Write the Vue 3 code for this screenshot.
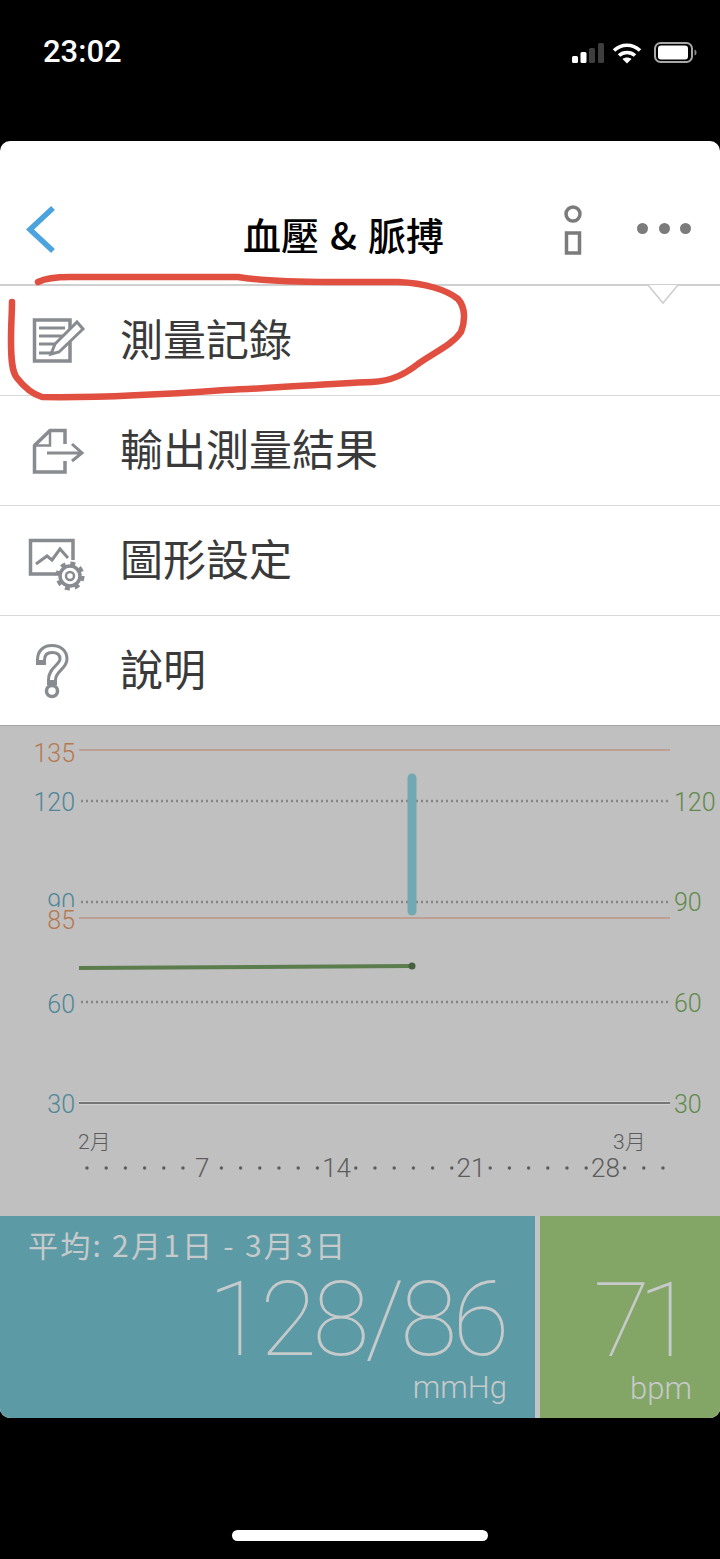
<script setup>
const menuItems = [
  { id: 'log', label: '測量記錄' },
  { id: 'export', label: '輸出測量結果' },
  { id: 'graph', label: '圖形設定' },
  { id: 'help', label: '說明' }
];

const leftAxis = [
  { value: '120', y: 801, tone: 'sys' },
  { value: '60', y: 1003, tone: 'sys' },
  { value: '30', y: 1103, tone: 'sys' },
  { value: '135', y: 752, tone: 'limit' },
  { value: '85', y: 919, tone: 'limit' }
];
const rightAxis = [120, 90, 60, 30].map((value) => ({ value, y: 1103 - (value - 30) * 3.353 }));
const dotted = [801, 902, 1002];

const labelled = { 7: '7', 14: '14', 21: '21', 28: '28' };
const days = Array.from({ length: 31 }, (_, i) => ({
  x: 87 + i * 19.2,
  label: labelled[i + 1]
}));
</script>

<template>
  <div class="screen">
    <header class="status">
      <span class="time">23:02</span>
      <div class="status-icons">
        <svg width="34" height="22" viewBox="0 0 34 22">
          <rect x="2" y="14" width="6" height="7" rx="1.5" fill="#fff" />
          <rect x="10.500" y="10" width="6" height="11" rx="1.5" fill="#fff" />
          <rect x="19" y="6" width="6" height="15" rx="1.5" fill="#3e3e3e" />
          <rect x="28" y="1" width="6" height="20" rx="1.5" fill="#3e3e3e" />
        </svg>
        <svg class="wifi" width="30" height="22" viewBox="0 0 30 22" fill="none" stroke="#fff" stroke-width="3.6">
          <path d="M2 8.500C9.500 1.500 20.500 1.500 28 8.500" />
          <path d="M7 13.500C11.500 9.500 18.500 9.500 23 13.500" />
          <path d="M15 21.500L10.500 17C13 15 17 15 19.500 17Z" fill="#fff" stroke="none" />
        </svg>
        <svg class="battery" width="44" height="22" viewBox="0 0 44 22">
          <rect x="1" y="1" width="37" height="19" rx="5.500" fill="none" stroke="#a8a8a8" stroke-width="2" />
          <rect x="4" y="3.500" width="30" height="14" rx="3" fill="#fff" />
          <path d="M40.500 7.500C42 8 42.500 9 42.500 10.500C42.500 12 42 13 40.500 13.500Z" fill="#8a8a8a" />
        </svg>
      </div>
    </header>

    <main class="card">
      <nav class="nav">
        <svg class="back" width="32" height="48" viewBox="0 0 32 48" fill="none" stroke="#4ba4de" stroke-width="5.500">
          <path d="M28 3L5 24.500L28 46" />
        </svg>
        <h1 class="title">血壓 &amp; 脈搏</h1>
        <svg class="info" width="20" height="52" viewBox="0 0 20 52" fill="none" stroke="#7b7b7b" stroke-width="3.500">
          <circle cx="10" cy="11" r="7" />
          <rect x="3.500" y="30" width="13" height="20" />
        </svg>
        <div class="more">
          <i></i><i></i><i></i>
        </div>
      </nav>

      <ul class="menu">
        <li v-for="item in menuItems" :key="item.id" class="menu-row">
          <svg class="menu-icon" width="70" height="70" viewBox="0 0 70 70" fill="none" stroke="#888b90" stroke-width="3.500">
            <template v-if="item.id === 'log'">
              <path d="M50 25V14H14.500V55H50V36" />
              <path d="M19 22H45M19 30H43M19 38H37M19 47H32" stroke-width="3" />
              <path d="M57 16L63 23L39 46L31 48L35 38Z" fill="#fff" stroke-width="3" />
            </template>
            <template v-else-if="item.id === 'export'">
              <path d="M45 28V14.500H30L14.500 29.500V56H45V45" />
              <path d="M30 14.500V29.500H14.500" stroke-width="2.500" />
              <path d="M27 37H62M52 28L62 37L52 45" stroke-width="3" />
            </template>
            <template v-else-if="item.id === 'graph'">
              <path d="M36 48H10.500V14.500H53V34" />
              <path d="M16 38L27 30L32 34L40 23L48 32" stroke-width="3" />
              <circle cx="50" cy="50" r="10" />
              <circle cx="50" cy="50" r="12.800" stroke-width="3.500" stroke-dasharray="5 5.050" />
              <circle cx="50" cy="50" r="4" stroke-width="2.500" />
            </template>
            <template v-else>
              <path d="M21 24C21 17 25 13 32 13C39 13 43.500 17 43.500 23C43.500 31 32 33 32 44" stroke-width="10" stroke-linecap="square" />
              <path d="M21 24C21 17 25 13 32 13C39 13 43.500 17 43.500 23C43.500 31 32 33 32 44" stroke="#fff" stroke-width="4" />
              <circle cx="32" cy="55" r="5.500" stroke-width="3.500" />
            </template>
          </svg>
          <span class="menu-label">{{ item.label }}</span>
        </li>
      </ul>

      <svg class="chart" width="720" height="491" viewBox="0 725 720 491">
        <defs>
          <clipPath id="clip90">
            <rect x="0" y="880" width="78" height="27" />
          </clipPath>
        </defs>

        <line x1="0" x2="720" y1="725.500" y2="725.500" stroke="#a6a6a6" />
        <line x1="79" x2="670" y1="750" y2="750" class="limit-line" />
        <line x1="79" x2="670" y1="918" y2="918" class="limit-line" />
        <line v-for="y in dotted" :key="y" x1="81" x2="671" :y1="y" :y2="y" class="dotted-line" />
        <line x1="79" x2="670" y1="1103" y2="1103" stroke="#e0e0e0" stroke-width="4" opacity="0.5" />
        <line x1="79" x2="670" y1="1103" y2="1103" stroke="#757575" stroke-width="2" />

        <line x1="412" x2="412" y1="778" y2="911" stroke="#72a8b2" stroke-width="9" stroke-linecap="round" />
        <line x1="79" x2="412" y1="968" y2="966" stroke="#5b7c4c" stroke-width="4" />
        <circle cx="412" cy="966" r="3.500" fill="#45603f" />

        <text v-for="t in leftAxis" :key="t.value" x="75" :y="t.y + 9.500" text-anchor="end" class="axis" :class="t.tone">{{ t.value }}</text>
        <text x="75" y="911.500" text-anchor="end" class="axis sys" clip-path="url(#clip90)">90</text>
        <text v-for="t in rightAxis" :key="t.value" x="674" :y="t.y + 9.500" class="axis pulse">{{ t.value }}</text>

        <text x="78" y="1149" class="month">2月</text>
        <text x="613" y="1149" class="month">3月</text>
        <template v-for="d in days" :key="d.x">
          <text v-if="d.label" :x="d.x" y="1177" text-anchor="middle" class="day">{{ d.label }}</text>
          <circle v-else :cx="d.x" cy="1168" r="1.700" fill="#5c5c5c" />
        </template>
      </svg>

      <section class="summary">
        <div class="panel pressure">
          <p class="range">平均: 2月1日 - 3月3日</p>
          <p class="big">128/86</p>
          <p class="unit">mmHg</p>
        </div>
        <div class="panel pulse-panel">
          <p class="big">71</p>
          <p class="unit">bpm</p>
        </div>
      </section>

      <svg class="scribble" width="480" height="135" viewBox="0 270 480 135" fill="none" stroke="#e04f40" stroke-width="6.500" stroke-linecap="round" stroke-linejoin="round">
        <path d="M38 282C46 278 56 277 70 277H238C262 281 290 282 330 282H398C425 283 447 290 458 299C466 308 465 322 461 332C452 345 435 352 418 364C405 374 392 381 372 382C320 384 280 388 225 390C170 394 100 398 42 397C32 394 24 387 17 378C12 372 11 360 11 340C11 325 12 312 12 302" />
      </svg>
      <svg class="pointer" width="34" height="20" viewBox="0 0 34 20">
        <path d="M2 0L17 18L32 0" fill="#fff" stroke="#cdcdcd" stroke-width="1.500" />
      </svg>
    </main>

    <footer class="home">
      <span class="home-bar"></span>
    </footer>
  </div>
</template>

<style>
html,
body {
  margin: 0;
  background: #000;
}
</style>

<style scoped>
.screen {
  display: flex;
  flex-direction: column;
  width: 720px;
  height: 1559px;
  overflow: hidden;
  background: #000;
  font-family: "Noto Sans CJK TC", "Noto Sans", sans-serif;
}

.status {
  display: flex;
  flex: 0 0 141px;
  justify-content: space-between;
  align-items: flex-start;
  box-sizing: border-box;
  padding: 32px 22px 0 43px;
}

.time {
  color: #fff;
  font: 500 31px/40px Roboto, sans-serif;
}

.status-icons {
  display: flex;
  align-items: center;
  gap: 8px;
  margin-top: 10px;
}

.battery {
  margin-left: 4px;
}

.card {
  position: relative;
  display: flex;
  flex-direction: column;
  height: 1277px;
  border-radius: 10px;
  overflow: hidden;
  background: #fff;
}

.nav {
  display: flex;
  flex: 0 0 145px;
  align-items: flex-start;
  box-sizing: border-box;
  padding-left: 25px;
  border-bottom: 2px solid #d0d0d0;
}

.back {
  margin-top: 64px;
}

.title {
  width: 200px;
  margin: 68px 0 0 186px;
  color: #000;
  font-size: 38px;
  font-weight: 500;
  line-height: 50px;
  word-spacing: 2.5px;
  white-space: nowrap;
}

.info {
  margin: 62px 0 0 120px;
}

.more {
  display: flex;
  gap: 10.5px;
  margin: 82px 0 0 54px;
}

.more i {
  width: 11px;
  height: 11px;
  border-radius: 50%;
  background: #7b7b7b;
}

.menu {
  display: flex;
  flex: 0 0 439px;
  flex-direction: column;
  margin: 0;
  padding: 0;
  list-style: none;
}

.menu-row {
  display: flex;
  flex: 1;
  align-items: center;
  padding-left: 20px;
  border-bottom: 1px solid #d8d8d8;
}

.menu-row:last-child {
  border-bottom: 0;
}

.menu-icon {
  flex: none;
}

.menu-label {
  margin: 0 0 8px 30px;
  color: #3a3a3a;
  font-size: 43px;
  line-height: 60px;
  white-space: nowrap;
}

.chart {
  display: block;
  flex: none;
  background: #c0c0c0;
}

.limit-line {
  stroke: #bd9f93;
  stroke-width: 2;
}

.dotted-line {
  stroke: #858585;
  stroke-width: 2.500;
  stroke-dasharray: 2 3;
}

.axis {
  font: 300 25px Roboto, sans-serif;
}

.sys {
  fill: #4f8698;
}

.limit {
  fill: #b5784f;
}

.pulse {
  fill: #5f8a4a;
}

.month {
  fill: #5c5c5c;
  font: 300 21px Roboto, "Noto Sans CJK TC", sans-serif;
}

.day {
  fill: #5c5c5c;
  font: 300 26px Roboto, sans-serif;
}

.summary {
  display: flex;
  flex: 0 0 202px;
  gap: 5px;
  background: #c0c4c4;
}

.panel {
  display: flex;
  flex-direction: column;
  align-items: flex-end;
  box-sizing: border-box;
  color: #c6caca;
}

.panel p {
  margin: 0;
}

.pressure {
  flex: 0 0 535px;
  padding-right: 28px;
  background: #5c9aa6;
}

.pulse-panel {
  flex: 1;
  padding: 59px 28px 0 0;
  background: #83a566;
}

.range {
  align-self: flex-start;
  margin: 6px 0 0 28px !important;
  font-size: 30px;
  line-height: 44px;
  letter-spacing: 2.25px;
  white-space: nowrap;
}

.big {
  font: 100 104px/92px Roboto, sans-serif;
  letter-spacing: -4.5px;
}

.pressure .big {
  margin: 8px 2px 0 0 !important;
}

.pulse-panel .big {
  margin-right: 9px !important;
  letter-spacing: -12px;
}

.unit {
  font: 300 31px/44px Roboto, sans-serif;
}

.scribble {
  position: absolute;
  top: 129px;
  left: 0;
}

.pointer {
  position: absolute;
  top: 144px;
  left: 646px;
}

.home {
  display: flex;
  flex: 1;
  justify-content: center;
  padding-top: 112px;
}

.home-bar {
  width: 256px;
  height: 11px;
  border-radius: 6px;
  background: #fff;
}
</style>
